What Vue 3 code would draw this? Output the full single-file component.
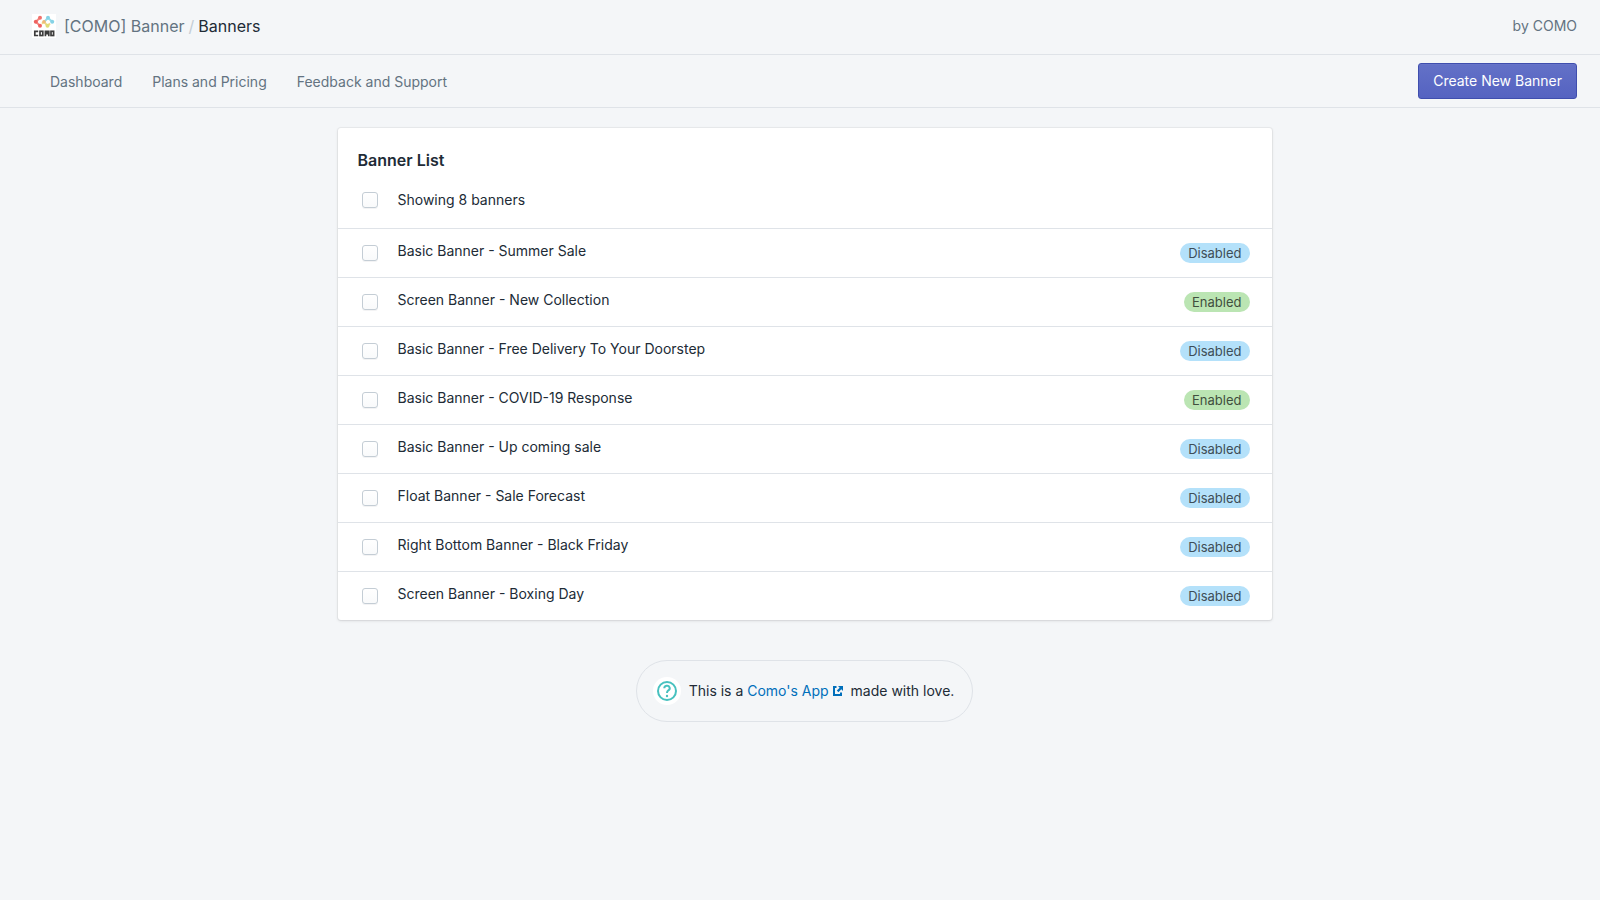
<script setup>
const banners = [
  { name: 'Basic Banner - Summer Sale', enabled: false },
  { name: 'Screen Banner - New Collection', enabled: true },
  { name: 'Basic Banner - Free Delivery To Your Doorstep', enabled: false },
  { name: 'Basic Banner - COVID-19 Response', enabled: true },
  { name: 'Basic Banner - Up coming sale', enabled: false },
  { name: 'Float Banner - Sale Forecast', enabled: false },
  { name: 'Right Bottom Banner - Black Friday', enabled: false },
  { name: 'Screen Banner - Boxing Day', enabled: false },
]
</script>

<template>
  <div class="page">
    <header class="topbar">
      <svg class="logo" viewBox="0 0 24 24" aria-hidden="true">
        <rect width="24" height="24" fill="#fff" />
        <g fill="none" stroke-width="2">
          <path d="M8 3.8 3.8 7.8 8 11.8" stroke="#f58a84" />
          <path d="M10 9.8 12 7.8 15.5 11.8 18 9.5" stroke="#ecd98a" />
          <path d="M12.5 7.5 16 3.8 20.2 7.8" stroke="#9bdcea" />
        </g>
        <circle cx="8" cy="3.8" r="2" fill="#f0716d" />
        <circle cx="3.8" cy="7.8" r="2" fill="#ee6260" />
        <circle cx="8" cy="11.8" r="2" fill="#ee6260" />
        <circle cx="12" cy="7.8" r="1.8" fill="#f0b878" />
        <circle cx="15.5" cy="11.8" r="2" fill="#dfdc78" />
        <circle cx="16" cy="3.8" r="2" fill="#86d3e6" />
        <circle cx="20.2" cy="7.8" r="2" fill="#86d3e6" />
        <g fill="none" stroke="#3c3c3c" stroke-width="1.7">
          <path d="M6.2 17.3H2.8v4.2h3.4" />
          <rect x="8" y="17.3" width="2.8" height="4.2" />
          <path d="M13.4 22.3v-5h3.4v5M15.1 17v3.5" />
          <rect x="19" y="17.3" width="2.6" height="4.2" />
        </g>
      </svg>
      <nav class="crumbs" aria-label="Breadcrumb">
        <a href="#">[COMO] Banner</a>
        <span class="slash">/</span>
        <span class="current">Banners</span>
      </nav>
      <span class="author">by COMO</span>
    </header>

    <div class="actions">
      <nav class="links" aria-label="Sections">
        <a href="#">Dashboard</a>
        <a href="#">Plans and Pricing</a>
        <a href="#">Feedback and Support</a>
      </nav>
      <button type="button" class="primary">Create New Banner</button>
    </div>

    <main class="content">
      <section class="card">
        <h2>Banner List</h2>
        <div class="summary">
          <input id="select-all" type="checkbox" />
          <label for="select-all">Showing 8 banners</label>
        </div>
        <ul class="list">
          <li v-for="(banner, i) in banners" :key="banner.name" class="row">
            <input :id="`banner-${i}`" type="checkbox" />
            <label :for="`banner-${i}`">{{ banner.name }}</label>
            <span class="badge" :class="{ enabled: banner.enabled }">{{ banner.enabled ? 'Enabled' : 'Disabled' }}</span>
          </li>
        </ul>
      </section>

      <footer class="help">
        <span class="help-icon">
          <svg viewBox="0 0 20 20" width="20" height="20" aria-hidden="true">
            <g fill="none" stroke="#47c1bf" stroke-width="2">
              <circle cx="10" cy="10" r="9" />
              <path d="M7.3 7.3a2.7 2.5 0 1 1 4 2.1C10.4 10 10 10.4 10 12" />
            </g>
            <circle cx="10" cy="15" r="1.2" fill="#47c1bf" />
          </svg>
        </span>
        <p>This is a <a href="#">Como's App<svg class="external" viewBox="0 0 10 10" width="10" height="10" aria-hidden="true">
          <path d="M3.5 1H1v8h7V6.5" fill="none" stroke="currentColor" stroke-width="2" />
          <path d="M5 0h5v5L8.3 3.3 5.4 6.2 3.8 4.6 6.7 1.7z" fill="currentColor" />
        </svg></a> made with love.</p>
      </footer>
    </main>
  </div>
</template>

<style>
body {
  margin: 0;
  background: #f4f6f8;
}
</style>

<style scoped>
.page {
  min-height: 100vh;
  box-sizing: border-box;
  background: #f4f6f8;
  color: #212b36;
  font-family: Inter, "Liberation Sans", sans-serif;
  font-size: 14px;
  font-weight: 380;
  line-height: 20px;
}
a {
  color: inherit;
  text-decoration: none;
}
.topbar {
  display: flex;
  align-items: center;
  height: 55px;
  box-sizing: border-box;
  padding: 0 23px 2px 32px;
  border-bottom: 1px solid #dfe3e8;
  color: #637381;
}
.logo {
  width: 24px;
  height: 24px;
  margin-right: 8px;
}
.crumbs {
  display: flex;
  font-size: 16px;
}
.slash {
  margin: 0 4px;
  color: #c4cdd5;
}
.current {
  color: #212b36;
}
.author {
  margin-left: auto;
}
.actions {
  display: flex;
  align-items: center;
  justify-content: space-between;
  height: 53px;
  box-sizing: border-box;
  padding: 0 23px 0 50px;
  border-bottom: 1px solid #dfe3e8;
  color: #637381;
}
.links {
  display: flex;
  gap: 30px;
  padding-top: 2px;
}
.primary {
  height: 36px;
  padding: 0 14px;
  border: 1px solid #3f4eae;
  border-radius: 3px;
  background: linear-gradient(to bottom, #6371c7, #5563c1);
  box-shadow: inset 0 1px 0 0 #6774c8;
  color: #fff;
  font: inherit;
}
.content {
  display: flex;
  flex-direction: column;
  align-items: center;
  padding: 20px 23px 40px 32px;
}
.card {
  width: 100%;
  max-width: 934px;
  border-radius: 3px;
  background: #fff;
  box-shadow: 0 0 0 1px rgba(63, 63, 68, 0.05), 0 1px 3px 0 rgba(63, 63, 68, 0.15);
}
h2 {
  margin: 0;
  padding: 20px 20px 0;
  font-size: 16px;
  font-weight: 600;
  line-height: 24px;
}
.summary,
.row {
  display: flex;
  align-items: center;
  gap: 20px;
  padding: 0 22px 0 24px;
}
.summary {
  height: 56px;
}
.list {
  margin: 0;
  padding: 0;
  list-style: none;
}
.row {
  height: 48px;
  border-top: 1px solid #dfe3e8;
}
.row label {
  padding-bottom: 4px;
}
input {
  appearance: none;
  width: 16px;
  height: 16px;
  margin: 0;
  border: 1px solid #c4cdd5;
  border-radius: 3px;
  background: linear-gradient(to bottom, #fff, #f9fafb);
  box-shadow: 0 1px 0 0 rgba(22, 29, 37, 0.05);
}
.badge {
  margin-left: auto;
  padding: 0 8px;
  border-radius: 10px;
  background: #b4e1fa;
  color: #3e4e57;
  font-size: 13px;
}
.badge.enabled {
  background: #bbe5b3;
  color: #414f3e;
}
.help {
  display: flex;
  align-items: center;
  gap: 8px;
  margin-top: 40px;
  padding: 16px 18px 16px 16px;
  border: 1px solid #dfe3e8;
  border-radius: 31px;
}
.help-icon {
  display: flex;
  padding: 4px;
  border-radius: 50%;
  background: #fff;
}
.help p {
  margin: 0;
}
.help a {
  color: #006fbb;
}
.external {
  margin: 0 4px;
}
</style>
